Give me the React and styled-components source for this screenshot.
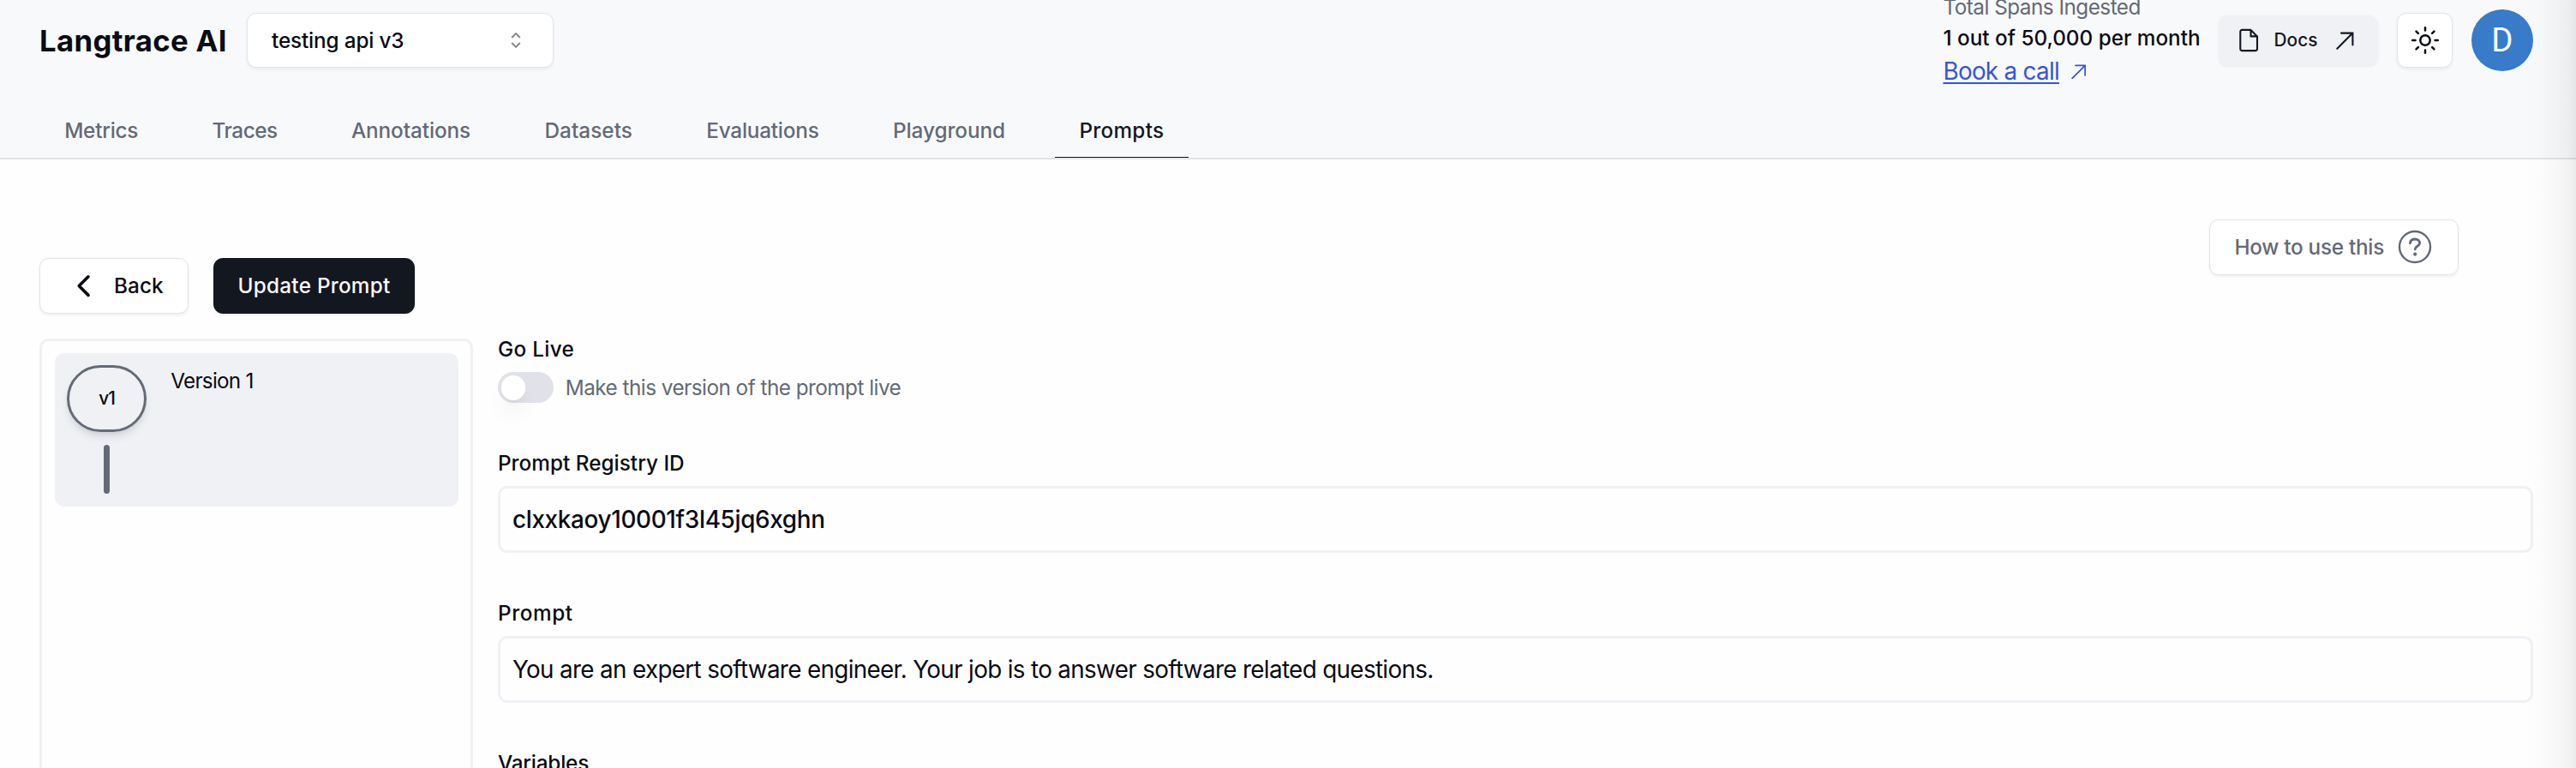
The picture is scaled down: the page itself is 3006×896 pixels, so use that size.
import React from "react";
import styled, { createGlobalStyle, css } from "styled-components";
import { ChevronLeft } from "lucide-react";

const GlobalStyle = createGlobalStyle`
  *, *::before, *::after { box-sizing: border-box; }
  html, body { margin: 0; height: 100%; overflow: hidden; background: #fefefe; }
  body { font-family: Inter, "Liberation Sans", sans-serif; color: #090b12; }
  button { font-family: inherit; color: inherit; }
`;

const softShadow = "0 1.8px 3.6px rgba(0, 0, 0, 0.06)";

const Page = styled.div`
  position: relative;
  height: 896px;
  overflow: hidden;
`;

const EdgeShade = styled.div`
  position: absolute;
  top: 0;
  right: 0;
  bottom: 0;
  width: 62px;
  pointer-events: none;
  background: linear-gradient(
    to right,
    rgba(0, 0, 0, 0) 0%,
    rgba(0, 0, 0, 0.008) 30%,
    rgba(0, 0, 0, 0.026) 65%,
    rgba(0, 0, 0, 0.048) 87%,
    rgba(0, 0, 0, 0.08) 100%
  );
`;

const Text = styled.span`
  font-size: ${(p) => p.$size || 24.3}px;
  font-weight: ${(p) => p.$weight || 500};
  letter-spacing: ${(p) => p.$track || 0}px;
  line-height: ${(p) => (p.$line ? `${p.$line}px` : 1)};
  color: ${(p) => p.$color || "inherit"};
  white-space: nowrap;
`;

const Header = styled.header`
  display: flex;
  flex-direction: column;
  justify-content: space-between;
  height: 186px;
  background: #f8f9fb;
  border-bottom: 2px solid #e1e3e7;
`;

const TopBar = styled.div`
  display: flex;
  align-items: center;
  height: 94.6px;
  padding: 0 50.2px 0 46px;
`;

const Brand = styled.div`
  display: flex;
  width: 242px;
`;

const ProjectSelect = styled.button`
  display: flex;
  align-items: center;
  justify-content: space-between;
  width: 358.4px;
  height: 64.4px;
  padding: 0 37px 0 28px;
  background: #fff;
  border: 1px solid #e1e3e8;
  border-radius: 10.8px;
  box-shadow: ${softShadow};
`;

const TopActions = styled.div`
  display: flex;
  align-items: center;
  gap: 22px;
  margin-left: auto;
`;

const Usage = styled.div`
  display: flex;
  flex-direction: column;
  width: 300px;
  height: 114px;
`;

const CallLink = styled.a`
  display: flex;
  align-items: center;
  gap: 14px;
  height: 42px;
  color: #3554e0;
`;

const LinkText = styled(Text)`
  padding-top: 1.6px;
  text-decoration: underline;
  text-decoration-thickness: 2px;
  text-underline-offset: 3px;
`;

const DocsButton = styled.button`
  display: flex;
  align-items: center;
  width: 186px;
  height: 58.4px;
  padding: 0 28px 0 23px;
  background: #f0f1f5;
  color: #131722;
  border: 0;
  border-radius: 10.8px;
  box-shadow: ${softShadow};

  svg:first-child { margin-right: 17px; }
  svg:last-child { margin-left: auto; }
`;

const ThemeButton = styled.button`
  display: flex;
  align-items: center;
  justify-content: center;
  width: 64.4px;
  height: 64.4px;
  padding: 0;
  background: #fff;
  border: 1px solid #e1e3e8;
  border-radius: 10.8px;
  box-shadow: ${softShadow};
`;

const Avatar = styled.div`
  display: flex;
  align-items: center;
  justify-content: center;
  width: 72px;
  height: 72px;
  border-radius: 50%;
  background: #377bc9;
  color: #fff;
  font: 400 38.4px/72px Roboto, sans-serif;
`;

const Tabs = styled.nav`
  display: flex;
  gap: 28.8px;
  height: 63.4px;
  padding-left: 46.4px;
`;

const Tab = styled.a`
  display: flex;
  align-items: center;
  padding: 0 28.8px;
  color: #636a77;
  ${(p) =>
    p.$active &&
    css`
      color: #131722;
      border-bottom: 1px solid #131722;
    `}
`;

const Main = styled.main`
  padding: 70px 50.2px 0 46.4px;
`;

const ActionRow = styled.div`
  display: flex;
  justify-content: space-between;
  align-items: flex-end;
  height: 110px;
  padding-right: 87px;
`;

const ButtonGroup = styled.div`
  display: flex;
  gap: 29px;
`;

const Button = styled.button`
  display: flex;
  align-items: center;
  height: 64.8px;
  padding: 0 28px;
  border: 1px solid #e1e3e8;
  border-radius: 10.8px;
  background: #fff;
  box-shadow: ${softShadow};
  ${(p) =>
    p.$primary &&
    css`
      width: 235px;
      justify-content: center;
      background: #131720;
      border-color: #131720;
      color: #f8f9fb;
    `}
`;

const BackButton = styled(Button)`
  width: 173.6px;
  padding: 0 0 0 29px;
  gap: 13.5px;
`;

const HelpButton = styled(Button)`
  align-self: flex-start;
  justify-content: space-between;
  width: 290.6px;
  padding: 0 30px 0 28.2px;
  color: #636a77;
`;

const Columns = styled.div`
  display: flex;
  gap: 28.8px;
  padding-top: 29.3px;
`;

const VersionPanel = styled.aside`
  width: 505.8px;
  height: 620px;
  padding: 14px 14px 14px 14.8px;
  border: 3px solid #f0f1f5;
  border-radius: 10.8px;
`;

const VersionItem = styled.div`
  display: flex;
  gap: 28px;
  height: 179px;
  padding: 14px;
  border-radius: 10.8px;
  background: #f0f1f5;
`;

const Timeline = styled.div`
  display: flex;
  flex-direction: column;
  align-items: center;
  gap: 15px;
`;

const VersionBadge = styled.div`
  display: flex;
  align-items: center;
  justify-content: center;
  width: 93px;
  height: 78px;
  border: 3px solid #636b77;
  border-radius: 999px;
  box-shadow: 0 7px 11px -2px rgba(0, 0, 0, 0.1), 0 3.6px 7px -3.6px rgba(0, 0, 0, 0.1);
`;

const TimelineBar = styled.div`
  width: 7.2px;
  height: 57px;
  border-radius: 4px;
  background: #636b77;
`;

const Form = styled.form`
  display: flex;
  flex: 1;
  flex-direction: column;
  gap: 58.3px;
  padding-top: 0.8px;
`;

const Field = styled.div`
  display: flex;
  flex-direction: column;
  gap: 14.8px;
  padding-bottom: 0.5px;
`;

const Input = styled.div`
  display: flex;
  align-items: center;
  height: 78px;
  padding: 1.6px 14px 0;
  border: 3px solid #f0f1f5;
  border-radius: 10.8px;
`;

const SwitchRow = styled.div`
  display: flex;
  align-items: center;
  gap: 13.8px;
  height: 36px;
`;

const Switch = styled.div`
  display: flex;
  align-items: center;
  width: 65px;
  height: 36px;
  padding: 0 3.6px;
  border-radius: 18px;
  background: #e1e2e9;
`;

const Thumb = styled.div`
  width: 28.8px;
  height: 28.8px;
  border-radius: 50%;
  background: #fff;
  box-shadow: 0 18px 27px -5.4px rgba(0, 0, 0, 0.1), 0 7.2px 10.8px -7.2px rgba(0, 0, 0, 0.1);
`;

const SelectIcon = () => (
  <svg width="12" height="18" viewBox="0 0 12 18" fill="none" stroke="#858585" strokeWidth="1.9">
    <path d="M1.2 6 6 1.2 10.8 6M1.2 12 6 16.8 10.8 12" />
  </svg>
);

const ArrowIcon = ({ size }) => (
  <svg width={size} height={size} viewBox="0 0 21 21" fill="none" stroke="currentColor" strokeWidth="2.1" strokeLinecap="round">
    <path d="M1.3 19.7 19.4 1.6M6 1.6h13.4V15.4" />
  </svg>
);

const FileIcon = () => (
  <svg width="24" height="28" viewBox="0 0 24 28" fill="none" stroke="currentColor" strokeWidth="2.1" strokeLinejoin="round">
    <path d="M14.5 1.9H4.3A2 2 0 0 0 2.3 3.9V24.1A2 2 0 0 0 4.3 26.1H20A2 2 0 0 0 22 24.1V9.4ZM14.5 1.9V9.4H22" />
  </svg>
);

const rays = [0, 45, 90, 135, 180, 225, 270, 315];

const SunIcon = () => (
  <svg width="34" height="34" viewBox="-17 -17 34 34" fill="none" stroke="currentColor" strokeWidth="2.5" strokeLinecap="round">
    <circle r="5.7" />
    {rays.map((angle) => (
      <path key={angle} d="M0-11.5V-14.8" transform={`rotate(${angle})`} />
    ))}
  </svg>
);

const HelpIcon = () => (
  <svg width="40" height="40" viewBox="-20 -20 40 40" fill="none" stroke="currentColor" strokeWidth="2.4">
    <circle r="18" />
    <path d="M-5.6-4.4C-5.2-7.2-2.8-9 .2-9 3.4-9 5.6-7 5.6-4.4 5.6-.8 .2-.7 .2 2.8" strokeWidth="2.9" strokeLinecap="round" />
    <circle cx=".2" cy="8.6" r="2.1" fill="currentColor" stroke="none" />
  </svg>
);

const tabs = [
  ["Metrics", -0.24],
  ["Traces", -0.5],
  ["Annotations", -0.08],
  ["Datasets", 0.04],
  ["Evaluations", -0.21],
  ["Playground", -0.04],
  ["Prompts", 0.28],
];

export default function App() {
  return (
    <Page>
      <GlobalStyle />
      <Header>
        <TopBar>
          <Brand>
            <Text $size={34.7} $weight={700} $track={0.35}>Langtrace AI</Text>
          </Brand>
          <ProjectSelect>
            <Text $track={-0.15}>testing api v3</Text>
            <SelectIcon />
          </ProjectSelect>
          <TopActions>
            <Usage>
              <Text $weight={400} $track={-0.51} $line={36} $color="#636a77">Total Spans Ingested</Text>
              <Text $line={36}>1 out of 50,000 per month</Text>
              <CallLink>
                <LinkText $size={27.8} $weight={400} $track={-0.7}>Book a call</LinkText>
                <ArrowIcon size={17.5} />
              </CallLink>
            </Usage>
            <DocsButton>
              <FileIcon />
              <Text $size={20.8} $track={0.1}>Docs</Text>
              <ArrowIcon size={21} />
            </DocsButton>
            <ThemeButton>
              <SunIcon />
            </ThemeButton>
            <Avatar>D</Avatar>
          </TopActions>
        </TopBar>
        <Tabs>
          {tabs.map(([name, track]) => (
            <Tab key={name} $active={name === "Prompts"}>
              <Text $track={track}>{name}</Text>
            </Tab>
          ))}
        </Tabs>
      </Header>

      <Main>
        <ActionRow>
          <ButtonGroup>
            <BackButton>
              <ChevronLeft size={43.2} strokeWidth={2} />
              <Text $track={0.03}>Back</Text>
            </BackButton>
            <Button $primary>
              <Text $track={0.25}>Update Prompt</Text>
            </Button>
          </ButtonGroup>
          <HelpButton>
            <Text $track={-0.28}>How to use this</Text>
            <HelpIcon />
          </HelpButton>
        </ActionRow>

        <Columns>
          <VersionPanel>
            <VersionItem>
              <Timeline>
                <VersionBadge>
                  <Text $size={20.8} $track={-0.85}>v1</Text>
                </VersionBadge>
                <TimelineBar />
              </Timeline>
              <Text $weight={400} $track={-0.74} $line={36}>Version 1</Text>
            </VersionItem>
          </VersionPanel>

          <Form>
            <Field>
              <Text $track={0.32} $line={23.4}>Go Live</Text>
              <SwitchRow>
                <Switch>
                  <Thumb />
                </Switch>
                <Text $weight={400} $track={-0.52} $color="#636a77">Make this version of the prompt live</Text>
              </SwitchRow>
            </Field>
            <Field>
              <Text $track={0.03} $line={23.4}>Prompt Registry ID</Text>
              <Input>
                <Text $size={27.8} $track={-0.3}>clxxkaoy10001f3l45jq6xghn</Text>
              </Input>
            </Field>
            <Field>
              <Text $track={0.6} $line={23.4}>Prompt</Text>
              <Input>
                <Text $size={27.8} $weight={400} $track={-0.65}>
                  You are an expert software engineer. Your job is to answer software related questions.
                </Text>
              </Input>
            </Field>
            <Field>
              <Text $track={-0.2} $line={23.4}>Variables</Text>
            </Field>
          </Form>
        </Columns>
      </Main>
      <EdgeShade />
    </Page>
  );
}
